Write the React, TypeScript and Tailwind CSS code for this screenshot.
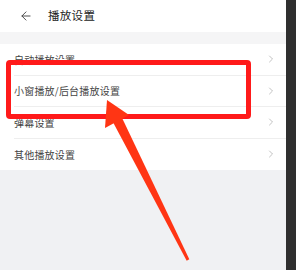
import React from "react";
import { ArrowLeft, ChevronRight } from "lucide-react";

const rows = ["自动播放设置", "小窗播放/后台播放设置", "弹幕设置", "其他播放设置"];

export default function App() {
  return (
    <div
      className="relative flex w-[296px] h-[270px] overflow-hidden bg-[#f0f1f3]"
      style={{ fontFamily: '"Noto Sans CJK SC", "Noto Sans", sans-serif' }}
    >
      <div className="flex-1 flex flex-col">
        {/* Header */}
        <div className="h-8 bg-white flex items-center pl-[19px]">
          <ArrowLeft size={14} strokeWidth={1.6} className="text-[#444]" />
          <span className="ml-[15px] text-[11.5px] tracking-[0.3px] text-[#222]">播放设置</span>
        </div>
        <div className="h-3 bg-[#f5f5f6]" />

        {/* List */}
        <div className="bg-white">
          {rows.map((label, i) => (
            <div key={label} className="flex items-center h-[31.5px] pl-[14px]">
              <div
                className={
                  "flex-1 h-full flex items-center pr-[9px] " +
                  (i < rows.length - 1 ? "border-b border-[#eeeeee]" : "")
                }
              >
                <span className="flex-1 text-[10px] tracking-[0.2px] text-[#444]">{label}</span>
                <ChevronRight size={12} strokeWidth={1.4} className="text-[#a8a8a8]" />
              </div>
            </div>
          ))}
        </div>
      </div>

      {/* Right dark edge */}
      <div className="w-[10px] bg-[#2f2f2f]" />

      {/* Highlight box */}
      <div className="absolute left-[6px] top-[60px] w-[245px] h-[59px] border-[5px] border-[#ff1a1a] rounded-[4px]" />

      {/* Pointer arrow */}
      <svg className="absolute left-0 top-0" width="296" height="270" viewBox="0 0 296 270">
        <polygon points="107,100 105,128 129,115" fill="#ff3514" />
        <polygon points="121.5,116.7 112.5,121.3 186.7,260.7 189.3,259.3" fill="#ff3514" />
      </svg>
    </div>
  );
}
